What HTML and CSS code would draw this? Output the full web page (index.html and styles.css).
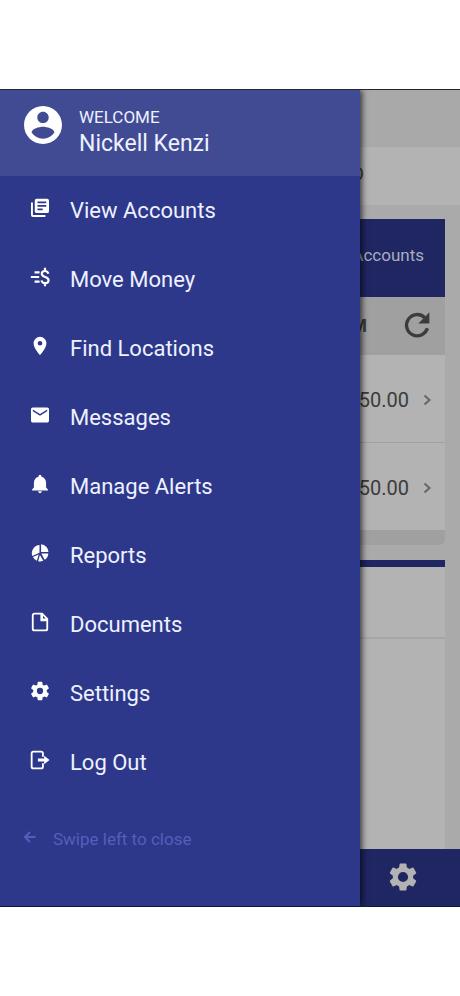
FILE: index.html
```html
<!DOCTYPE html>
<html lang="en">
<head>
<meta charset="utf-8">
<meta name="viewport" content="width=device-width, initial-scale=1">
<title>Accounts</title>
<link rel="stylesheet" href="styles.css">
</head>
<body>
<div class="app">
  <main class="page">
    <div class="topbar"></div>
    <div class="subbar"><span class="subbar-text">O</span></div>
    <div class="content">
      <section class="card accounts">
        <h2 class="card-head">Accounts</h2>
        <div class="card-tools">
          <span>M</span>
          <button class="icon-button" type="button" aria-label="Refresh">
            <svg class="refresh" viewBox="0 0 24 24"><path d="M19.800 14.500A8 8 0 1 1 17.700 6.400" fill="none" stroke="currentColor" stroke-width="2.500"/><path d="M21.300 2.500v8.300H13z" fill="currentColor"/></svg>
          </button>
        </div>
        <a class="account" href="#"><span>50.00</span><svg class="chevron" viewBox="0 0 12 12"><path d="M3.500 1.500 8.500 6l-5 4.500"/></svg></a>
        <a class="account" href="#"><span>50.00</span><svg class="chevron" viewBox="0 0 12 12"><path d="M3.500 1.500 8.500 6l-5 4.500"/></svg></a>
        <div class="card-foot"></div>
      </section>
      <section class="card details">
        <div class="details-head"></div>
      </section>
    </div>
    <div class="bottombar">
      <button class="icon-button" type="button" aria-label="Settings">
        <svg class="gear" viewBox="0 0 24 24"><path d="M19.140 12.940c.04-.3.06-.61.06-.94 0-.32-.02-.64-.07-.94l2.030-1.580a.49.49 0 0 0 .12-.61l-1.920-3.320a.488.488 0 0 0-.59-.22l-2.390.96c-.5-.38-1.030-.7-1.620-.94l-.36-2.540a.484.484 0 0 0-.48-.41h-3.840c-.24 0-.43.17-.47.41l-.36 2.540c-.59.24-1.130.57-1.620.94l-2.390-.96a.48.48 0 0 0-.59.22L2.740 8.870c-.12.21-.08.47.12.61l2.030 1.580c-.05.3-.09.63-.09.94s.02.64.07.94l-2.030 1.580a.49.49 0 0 0-.12.61l1.920 3.320c.12.22.37.29.59.22l2.390-.96c.5.38 1.030.7 1.620.94l.36 2.540c.05.24.24.41.48.41h3.840c.24 0 .44-.17.47-.41l.36-2.540c.59-.24 1.130-.56 1.620-.94l2.390.96c.22.08.47 0 .59-.22l1.920-3.320c.12-.22.07-.47-.12-.61zM12 15.600a3.600 3.600 0 1 1 0-7.200 3.600 3.600 0 0 1 0 7.200z"/></svg>
      </button>
    </div>
  </main>

  <aside class="drawer">
    <header class="profile">
      <svg class="avatar" viewBox="2 2 20 20"><path d="M12 2C6.480 2 2 6.480 2 12s4.480 10 10 10 10-4.480 10-10S17.520 2 12 2zm0 3c1.660 0 3 1.340 3 3s-1.340 3-3 3-3-1.340-3-3 1.340-3 3-3zm0 14.200a7.200 7.200 0 0 1-6-3.220c.03-1.990 4-3.080 6-3.080 1.990 0 5.970 1.090 6 3.080a7.200 7.200 0 0 1-6 3.220z"/></svg>
      <div>
        <div class="welcome">WELCOME</div>
        <div class="name">Nickell Kenzi</div>
      </div>
    </header>
    <nav class="menu">
      <a class="item" href="#"><svg viewBox="0 0 24 24"><path d="M3.500 5.500H1.200V20.500a2.300 2.300 0 0 0 2.300 2.300h15v-2.300h-15z"/><path d="M20.500 1H8a2.300 2.300 0 0 0-2.300 2.300v12.500c0 1.200 1 2.300 2.300 2.300h12.500a2.300 2.300 0 0 0 2.300-2.300V3.300A2.300 2.300 0 0 0 20.500 1zm-1 9.600H9V8.400h10.500zm-4.300 4.200H9v-2.200h6.200zm4.300-8.400H9V4.200h10.500z"/></svg>View Accounts</a>
      <a class="item" href="#"><svg viewBox="0 0 24 24"><path d="M5.500 6.500h6M1 12h10M5.500 17.500h6M22 8C21.500 5.900 20 4.800 18 4.800c-2.300 0-3.900 1.300-3.900 3.300 0 4.700 8.200 3 8.200 7.700 0 2.200-1.800 3.500-4.200 3.500-2.300 0-3.900-1.200-4.300-3.300M18 1v4M18 19v4" fill="none" stroke="currentColor" stroke-width="2.600"/></svg>Move Money</a>
      <a class="item" href="#"><svg viewBox="0 0 24 24"><path d="M12 1a7.700 7.700 0 0 0-7.700 7.700C4.300 14.600 12 23 12 23s7.700-8.400 7.700-14.300A7.700 7.700 0 0 0 12 1zm0 10.500a2.800 2.800 0 1 1 0-5.600 2.800 2.800 0 0 1 0 5.600z"/></svg>Find Locations</a>
      <a class="item" href="#"><svg viewBox="0 0 24 24"><path d="M20.600 3H3.400A2.200 2.200 0 0 0 1.200 5.200v13.600c0 1.200 1 2.200 2.200 2.200h17.200c1.200 0 2.200-1 2.200-2.200V5.200C22.800 4 21.800 3 20.600 3zm0 4.600L12 13 3.400 7.600V5.300L12 10.700l8.600-5.400z"/></svg>Messages</a>
      <a class="item" href="#"><svg viewBox="0 0 24 24"><path d="M12 23a2.300 2.300 0 0 0 2.300-2.200H9.700A2.300 2.300 0 0 0 12 23zm7.300-6.700v-5.700c0-3.500-2-6.300-5.500-7.200V2.800a1.800 1.800 0 0 0-3.600 0v.6c-3.500.9-5.500 3.700-5.500 7.200v5.700L2.500 18.600v1.200h19v-1.200z"/></svg>Manage Alerts</a>
      <a class="item" href="#"><svg viewBox="0 0 24 24"><path d="M13.300 1.600a9.600 9.600 0 0 1 8.900 9.200h-8.900zM11.400 2.300v9.400L2.700 15.500A10 10 0 0 1 11.400 2.300zM3.500 16.900l7-3-2.300 7.500a10 10 0 0 1-4.700-4.500zM11.900 14.500l4 6.700a10 10 0 0 1-6.100.7zM13.600 12.500h8.400a10 10 0 0 1-4.500 7.700z"/></svg>Reports</a>
      <a class="item" href="#"><svg viewBox="0 0 24 24"><path d="M14.500 2H5.300A2 2 0 0 0 3.300 4v16a2 2 0 0 0 2 2h13.400a2 2 0 0 0 2-2V8.200zv6.800h6" fill="none" stroke="currentColor" stroke-width="2.200"/><path d="M13.500 2v8h7.500" fill="none" stroke="currentColor" stroke-width="2"/></svg>Documents</a>
      <a class="item" href="#"><svg viewBox="1.500 1.500 21 21"><path d="M19.140 12.940c.04-.3.06-.61.06-.94 0-.32-.02-.64-.07-.94l2.030-1.580a.49.49 0 0 0 .12-.61l-1.920-3.320a.488.488 0 0 0-.59-.22l-2.390.96c-.5-.38-1.030-.7-1.620-.94l-.36-2.540a.484.484 0 0 0-.48-.41h-3.840c-.24 0-.43.17-.47.41l-.36 2.540c-.59.24-1.130.57-1.620.94l-2.390-.96a.48.48 0 0 0-.59.22L2.740 8.870c-.12.21-.08.47.12.61l2.030 1.580c-.05.3-.09.63-.09.94s.02.64.07.94l-2.030 1.580a.49.49 0 0 0-.12.61l1.920 3.320c.12.22.37.29.59.22l2.390-.96c.5.38 1.030.7 1.620.94l.36 2.540c.05.24.24.41.48.41h3.840c.24 0 .44-.17.47-.41l.36-2.540c.59-.24 1.130-.56 1.620-.94l2.390.96c.22.08.47 0 .59-.22l1.920-3.320c.12-.22.07-.47-.12-.61zM12 15.300a3.300 3.300 0 1 1 0-6.600 3.300 3.300 0 0 1 0 6.600z"/></svg>Settings</a>
      <a class="item" href="#"><svg viewBox="0 0 24 24"><path d="M15.500 8V4a2 2 0 0 0-2-2H4a2 2 0 0 0-2 2v16c0 1.100.9 2 2 2h9.500a2 2 0 0 0 2-2v-4" fill="none" stroke="currentColor" stroke-width="2.200"/><path d="M9.500 10.300H17V7l6.500 5-6.500 5v-3.300H9.500z"/></svg>Log Out</a>
    </nav>
    <div class="hint"><svg viewBox="0 0 12 12"><path d="M11.500 6H1M6 1 1 6l5 5"/></svg>Swipe left to close</div>
  </aside>
</div>
</body>
</html>
```
FILE: styles.css
```css
* {
  box-sizing: border-box;
}

body {
  margin: 0;
  min-height: 100vh;
  padding: 89px 0;
  display: flex;
  flex-direction: column;
  background: #fff;
  font-family: Roboto, sans-serif;
}

a {
  color: inherit;
  text-decoration: none;
}

svg {
  display: block;
  flex: none;
  fill: currentColor;
}

.app {
  position: relative;
  flex: 1;
  display: flex;
  overflow: hidden;
  border-top: 1px solid #25252b;
  border-bottom: 1px solid #10163f;
}

.page {
  flex: 1;
  display: flex;
  flex-direction: column;
  background: #aaa;
  color: #3c3c3c;
}

.topbar {
  height: 57px;
  background: #a9a9a9;
}

.subbar {
  height: 58px;
  display: flex;
  align-items: center;
  justify-content: flex-end;
  padding: 0 96px 6px;
  background: #b3b3b3;
}

.subbar-text {
  font-size: 18px;
}

.content {
  flex: 1;
  display: flex;
  flex-direction: column;
  gap: 15px;
  padding: 14px 15px 0;
}

.card-head {
  height: 78px;
  margin: 0;
  padding: 0 21px 6px;
  display: flex;
  align-items: center;
  justify-content: flex-end;
  background: #1f2662;
  color: #a9adbf;
  font-size: 17px;
  font-weight: 400;
}

.card-tools {
  height: 58px;
  padding: 0 12px 2px 0;
  display: flex;
  align-items: center;
  justify-content: flex-end;
  gap: 34px;
  background: #a0a0a0;
  font-size: 18px;
  font-weight: 700;
}

.icon-button {
  padding: 0;
  border: 0;
  background: none;
  color: inherit;
}

.refresh {
  width: 32px;
  height: 32px;
}

.account {
  height: 88px;
  padding: 2px 12px 0 0;
  display: flex;
  align-items: center;
  justify-content: flex-end;
  gap: 12px;
  border-bottom: 1px solid #a0a0a0;
  background: #b3b3b3;
  font-size: 20px;
}

.chevron {
  width: 12px;
  height: 12px;
  fill: none;
  stroke: #666;
  stroke-width: 2;
}

.card-foot {
  height: 14px;
  border-radius: 0 0 6px 6px;
  background: #a0a0a0;
}

.details {
  flex: 1;
  border-top: 7px solid #1f2662;
  background: #b3b3b3;
}

.details-head {
  height: 72px;
  border-bottom: 2px solid #a6a6a6;
}

.bottombar {
  height: 57px;
  padding: 0 40px 2px;
  display: flex;
  align-items: center;
  justify-content: flex-end;
  background: #1f2662;
  color: #b3b3b3;
}

.gear {
  width: 34px;
  height: 34px;
}

.drawer {
  position: absolute;
  inset: 0 auto 0 0;
  width: min(360px, 85%);
  background: #2d388a;
  color: #eef1ff;
  box-shadow: 2px 0 6px rgba(0, 0, 0, 0.7);
}

.profile {
  height: 86px;
  padding: 16px 24px;
  display: flex;
  gap: 17px;
  background: #414b94;
}

.avatar {
  width: 38px;
  height: 38px;
  color: #fff;
}

.welcome {
  font-size: 17px;
  line-height: 22px;
}

.name {
  font-size: 23px;
  line-height: 32px;
}

.item {
  height: 69px;
  padding: 0 30px;
  display: flex;
  align-items: center;
  gap: 20px;
  font-size: 22px;
}

.item svg {
  width: 20px;
  height: 20px;
  margin-bottom: 6px;
  color: #fff;
}

.hint {
  padding: 30px 24px;
  display: flex;
  align-items: center;
  gap: 17px;
  color: #555fba;
  font-size: 17px;
  line-height: 24px;
}

.hint svg {
  width: 12px;
  height: 12px;
  margin-bottom: 4px;
  fill: none;
  stroke: currentColor;
  stroke-width: 2;
}
```
